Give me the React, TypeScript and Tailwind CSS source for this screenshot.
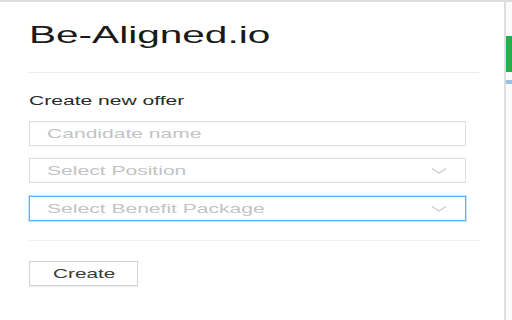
import React from 'react'

// the screenshot is horizontally stretched, so text is widened to match
function Wide({ children, className = '' }: { children: React.ReactNode; className?: string }) {
  return (
    <span className={`block origin-left whitespace-nowrap ${className}`}>
      {children}
    </span>
  )
}

function Chevron() {
  return (
    <svg width="16" height="8" viewBox="0 0 16 8" className="shrink-0">
      <polyline points="1,1.5 8,6 15,1.5" fill="none" stroke="#c9c9c9" strokeWidth="1.2" />
    </svg>
  )
}

function Field({
  placeholder,
  select = false,
  focused = false,
}: {
  placeholder: string
  select?: boolean
  focused?: boolean
}) {
  return (
    <div
      className={`flex h-[25px] w-[437px] items-center justify-between pl-[17px] pr-[18px] ${
        focused
          ? 'mt-px border border-[#5cb0f7] shadow-[0_0_0_1px_rgba(92,176,247,0.35)]'
          : 'border border-[#dcdcdc]'
      }`}
    >
      <Wide className="scale-x-[1.62] text-[13px] leading-[16px] text-[#c3c3c3]">{placeholder}</Wide>
      {select && <Chevron />}
    </div>
  )
}

export default function App() {
  return (
    <div
      className="flex h-[320px] w-[512px] overflow-hidden bg-white"
      style={{ fontFamily: '"Liberation Sans", Arial, sans-serif' }}
    >
      <div className="flex w-[506px] flex-col border-t-2 border-r-2 border-[#dedede] pl-[29px] pr-[25px]">
        <div className="flex pt-[19px]">
          <Wide className="scale-x-[1.69] text-[24px] leading-[28px] text-[#1a1a1a]">Be-Aligned.io</Wide>
        </div>
        <div className="mt-[23px] h-px bg-[#ececec]" />
        <div className="mt-[20px] flex">
          <Wide className="scale-x-[1.62] text-[13px] leading-[16px] text-[#2a2a2a]">Create new offer</Wide>
        </div>
        <div className="mt-[12px] flex flex-col gap-[12px]">
          <Field placeholder="Candidate name" />
          <Field placeholder="Select Position" select />
          <Field placeholder="Select Benefit Package" select focused />
        </div>
        <div className="mt-[19px] h-px bg-[#efefef]" />
        <div className="mt-[20px] flex">
          <button
            type="button"
            className="flex h-[25px] w-[109px] items-center border border-[#d2d2d2] bg-white pl-[23px] shadow-[0_1px_1px_rgba(0,0,0,0.06)]"
          >
            <Wide className="scale-x-[1.6] text-[13px] leading-[16px] text-[#3a3a3a]">Create</Wide>
          </button>
        </div>
      </div>
      <div className="flex flex-1 flex-col border-t-2 border-[#dedede] bg-[#fafafa]">
        <div className="mt-[34px] h-[36px] bg-[#1fb24b]" />
        <div className="mt-[8px] h-[4px] bg-[#93c3ea]" />
      </div>
    </div>
  )
}
